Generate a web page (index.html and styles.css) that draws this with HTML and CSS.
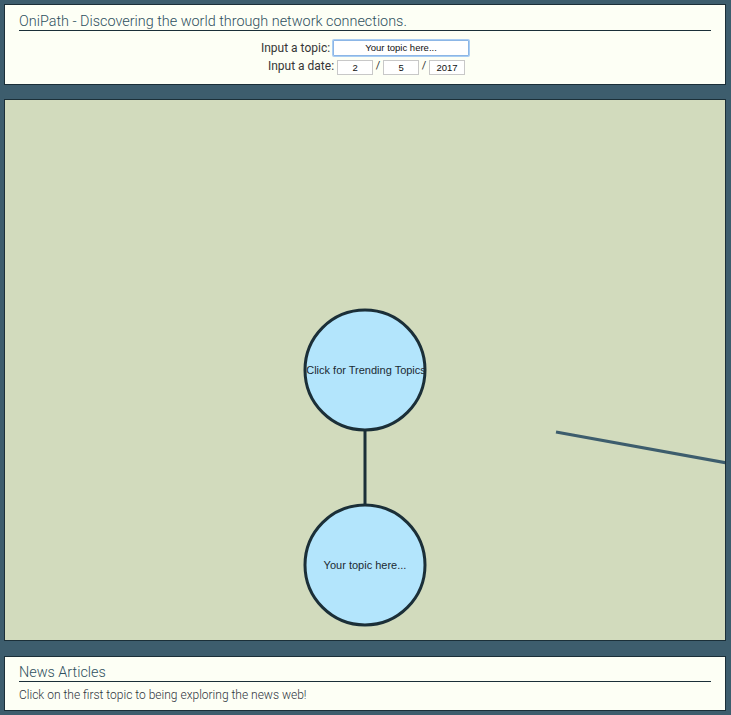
FILE: index.html
```html
<!DOCTYPE html>
<html>
<head>
<meta charset="utf-8">
<link rel="stylesheet" href="styles.css">
</head>
<body>
<div class="panel header">
  <h1 class="title">OniPath - Discovering the world through network connections.</h1>
  <div class="form">
    <div class="row">
      <label class="lbl">Input a topic:</label>
      <input class="topic" type="text" value="Your topic here...">
    </div>
    <div class="row">
      <label class="lbl lbl-date">Input a date:</label>
      <input class="date" type="text" value="2">
      <span class="slash">/</span>
      <input class="date" type="text" value="5">
      <span class="slash">/</span>
      <input class="date" type="text" value="2017">
    </div>
  </div>
</div>
<div class="panel graph">
  <svg class="net" width="720" height="540" viewBox="0 0 720 540">
    <line x1="360" y1="330" x2="360" y2="406" class="edge"/>
    <line x1="551" y1="332" x2="722" y2="363" class="edge2"/>
    <circle cx="360" cy="270" r="60" class="node"/>
    <circle cx="360" cy="465" r="60" class="node"/>
    <text x="361" y="274" class="ntext">Click for Trending Topics</text>
    <text x="360" y="469" class="ntext">Your topic here...</text>
  </svg>
</div>
<div class="panel news">
  <h2 class="title">News Articles</h2>
  <p class="msg">Click on the first topic to being exploring the news web!</p>
</div>
</body>
</html>
```
FILE: styles.css
```css
html, body {
  margin: 0;
  padding: 0;
}
body {
  background: #3d5d6d;
  padding: 4px 5px 4px 4px;
  font-family: Roboto, "Liberation Sans", sans-serif;
}
.panel {
  background: #fdfff5;
  border: 1px solid #1b2f38;
  box-sizing: border-box;
}
.header {
  height: 81px;
  padding: 9px 14px 0 14px;
}
.title {
  margin: 0;
  font-weight: 300;
  font-size: 14.4px;
  line-height: 16px;
  color: #2f5060;
  border-bottom: 1px solid #1b2f38;
  padding-bottom: 0;
}
.form {
  display: flex;
  flex-direction: column;
  align-items: center;
  margin-top: 9px;
  gap: 2px;
}
.row {
  display: flex;
  align-items: center;
  height: 16px;
}
.lbl {
  font-size: 12px;
  color: #363636;
  font-weight: 400;
  margin-right: 3px;
}
.lbl-date {
  margin-left: 3px;
}
input {
  font-family: "Liberation Sans", Arial, sans-serif;
  font-size: 9.5px;
  text-align: center;
  color: #111;
  background: #fff;
  box-sizing: border-box;
  margin: 0;
  padding: 0;
}
.topic {
  width: 136px;
  height: 16px;
  border: 1px solid #8cb6e6;
  box-shadow: 0 0 0 1px #a9cdf3;
  border-radius: 1px;
  margin-top: -1px;
}
.date {
  width: 36px;
  height: 15px;
  border: 1px solid #c8c8c8;
  margin-top: 3px;
}
.slash {
  font-size: 11px;
  color: #333;
  width: 10px;
  text-align: center;
  margin-top: -2px;
}
.graph {
  margin-top: 14px;
  height: 542px;
  background: #d2dbbd;
  overflow: hidden;
}
.net {
  display: block;
}
.edge {
  stroke: #1b2f38;
  stroke-width: 3;
}
.edge2 {
  stroke: #3d5d6d;
  stroke-width: 3;
}
.node {
  fill: #b3e5fc;
  stroke: #1b2f38;
  stroke-width: 3;
}
.ntext {
  font-family: "Liberation Sans", Arial, sans-serif;
  font-size: 11px;
  fill: #1b2a33;
  text-anchor: middle;
}
.news {
  margin-top: 15px;
  height: 55px;
  padding: 8px 14px 0 14px;
}
.msg {
  margin: 6px 0 0 0;
  font-size: 12px;
  font-weight: 300;
  color: #2e3440;
}
```
